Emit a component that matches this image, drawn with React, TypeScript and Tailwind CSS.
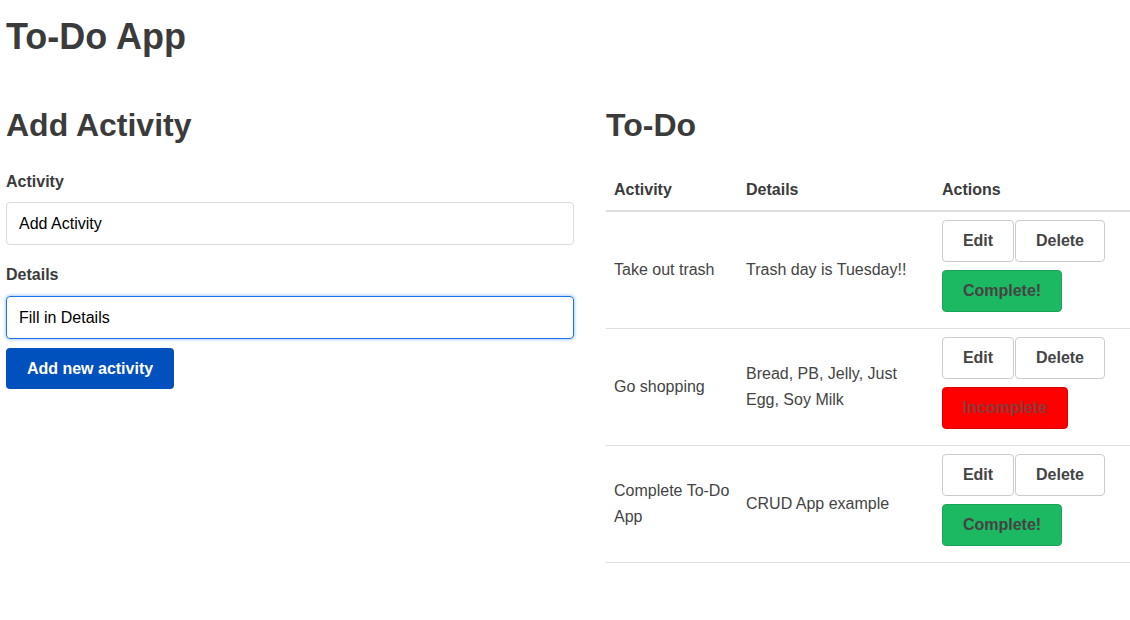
const todos = [
  { activity: "Take out trash", details: "Trash day is Tuesday!!", done: false },
  { activity: "Go shopping", details: "Bread, PB, Jelly, Just Egg, Soy Milk", done: true },
  { activity: "Complete To-Do App", details: "CRUD App example", done: false },
];

export default function App() {
  return (
    <div className="h-[620px] w-[1130px] overflow-hidden bg-white pl-[6px] font-['Liberation_Sans',Arial,sans-serif] text-[16px] leading-[1.6] text-[#3b3b3b]">
      <h1 className="pt-[10px] text-[36px] font-bold leading-[54px]">To-Do App</h1>

      <div className="mt-[41px] flex gap-[32px]">
        <div className="w-[568px] shrink-0">
          <h2 className="text-[32px] font-bold leading-[40px]">Add Activity</h2>
          <form className="mt-[27px]">
            <label className="block font-bold leading-[20px]">Activity</label>
            <input
              className="mt-[10px] block h-[43px] w-full rounded-[4px] border border-[#dcdcdc] px-[12px] text-black outline-none"
              defaultValue="Add Activity"
            />
            <label className="mt-[20px] block font-bold leading-[20px]">Details</label>
            <input
              className="mt-[11px] block h-[43px] w-full rounded-[4px] border border-[#1a73e8] px-[12px] text-black shadow-[0_0_3px_1px_rgba(26,115,232,0.35)] outline-none"
              defaultValue="Fill in Details"
            />
            <button
              type="button"
              className="mt-[9px] h-[41px] w-[168px] rounded-[4px] bg-[#0050bd] font-bold text-white"
            >
              Add new activity
            </button>
          </form>
        </div>

        <div className="flex-1">
          <h2 className="text-[32px] font-bold leading-[40px]">To-Do</h2>
          <table className="mt-[35px] w-full border-collapse text-left">
            <thead>
              <tr className="border-b-2 border-[#dedede]">
                <th className="w-[132px] px-[8px] pb-[10px] leading-[20px] font-bold">Activity</th>
                <th className="w-[196px] px-[8px] pb-[10px] leading-[20px] font-bold">Details</th>
                <th className="px-[8px] pb-[10px] leading-[20px] font-bold">Actions</th>
              </tr>
            </thead>
            <tbody>
              {todos.map((t) => (
                <tr key={t.activity} className="h-[117px] border-b border-[#dedede]">
                  <td className="px-[8px] align-middle text-[#444]">{t.activity}</td>
                  <td className="px-[8px] align-middle text-[#444]">{t.details}</td>
                  <td className="px-[8px] pt-[8px] pb-[8px] align-top">
                    <div className="flex gap-[1px]">
                      <button className="h-[42px] w-[72px] rounded-[4px] border border-[#cccccc] bg-white font-bold text-[#444]">
                        Edit
                      </button>
                      <button className="h-[42px] w-[90px] rounded-[4px] border border-[#cccccc] bg-white font-bold text-[#444]">
                        Delete
                      </button>
                    </div>
                    {t.done ? (
                      <button className="mt-[8px] h-[42px] w-[126px] rounded-[4px] border border-[#e00000] bg-[#ff0000] font-bold text-[#8a3a3a]">
                        Incomplete
                      </button>
                    ) : (
                      <button className="mt-[8px] h-[42px] w-[120px] rounded-[4px] border border-[#1aa556] bg-[#1db862] font-bold text-[#444]">
                        Complete!
                      </button>
                    )}
                  </td>
                </tr>
              ))}
            </tbody>
          </table>
        </div>
      </div>
    </div>
  );
}
